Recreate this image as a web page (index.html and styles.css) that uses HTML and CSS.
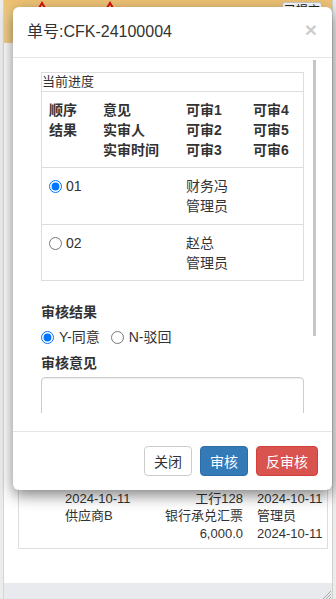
FILE: index.html
```html
<!DOCTYPE html>
<html lang="zh-CN">
<head>
<meta charset="utf-8">
<title>审核</title>
<link rel="stylesheet" href="styles.css">
</head>
<body>
<div class="page">
  <div class="topbar">
    <svg class="mark mark-1" width="8" height="8" viewBox="0 0 8 8"><path d="M1 7 L4 2 L7 7" fill="none" stroke="#e01010" stroke-width="2"/></svg>
    <svg class="mark mark-2" width="8" height="8" viewBox="0 0 8 8"><path d="M1 7 L4 2 L7 7" fill="none" stroke="#e01010" stroke-width="2"/></svg>
    <span class="top-btn">已提交</span>
  </div>
  <div class="content">
    <div class="bill">
      <div class="bill-row"><span>2024-10-11</span><span class="num">工行128</span><span class="c3">2024-10-11</span></div>
      <div class="bill-row"><span>供应商B</span><span class="num">银行承兑汇票</span><span class="c3">管理员</span></div>
      <div class="bill-row"><span></span><span class="num">6,000.0</span><span class="c3">2024-10-11</span></div>
    </div>
  </div>
  <div class="statusbar">
    <svg class="grip" width="9" height="9" viewBox="0 0 9 9"><path d="M9 1 L1 9 M9 4 L4 9 M9 7 L7 9" stroke="#a8a8a8" stroke-width="1"/></svg>
  </div>
</div>

<div class="modal">
  <div class="modal-header">
    <h4 class="modal-title">单号:CFK-24100004</h4>
    <span class="close">×</span>
  </div>
  <div class="modal-body">
    <div class="scroll">
      <div class="panel">
        <div class="panel-heading">当前进度</div>
        <div class="prog-row prog-head">
          <div>顺序<br>结果</div>
          <div>意见<br>实审人<br>实审时间</div>
          <div>可审1<br>可审2<br>可审3</div>
          <div>可审4<br>可审5<br>可审6</div>
        </div>
        <div class="prog-row">
          <div class="seq"><input type="radio" name="p" checked>01</div>
          <div></div>
          <div>财务冯<br>管理员</div>
          <div></div>
        </div>
        <div class="prog-row last">
          <div class="seq"><input type="radio" name="p">02</div>
          <div></div>
          <div>赵总<br>管理员</div>
          <div></div>
        </div>
      </div>
      <div class="field-label first">审核结果</div>
      <div class="radios">
        <label class="opt"><input type="radio" name="r" checked>Y-同意</label>
        <label class="opt"><input type="radio" name="r">N-驳回</label>
      </div>
      <div class="field-label">审核意见</div>
      <textarea class="textarea"></textarea>
    </div>
    <div class="thumb"></div>
  </div>
  <div class="modal-footer">
    <button class="btn btn-default">关闭</button>
    <button class="btn btn-primary">审核</button>
    <button class="btn btn-danger">反审核</button>
  </div>
</div>
</body>
</html>
```

FILE: styles.css
```css
* { box-sizing: border-box; }
html, body { margin: 0; padding: 0; }
body {
  width: 336px;
  height: 599px;
  overflow: hidden;
  background: #ececec;
  font-family: "Liberation Sans", Arial, "Noto Sans CJK SC", sans-serif;
  color: #333;
  position: relative;
}
.page {
  margin: 0 3px 0 3px;
  height: 599px;
  background: #fff;
  border-left: 1px solid #d6d6d6;
  border-right: 1px solid #d0d0d0;
  display: flex;
  flex-direction: column;
}
.topbar {
  height: 43px;
  background: linear-gradient(#eec272, #f4cf89 40%, #f5d18c);
  position: relative;
  flex: none;
}
.mark { position: absolute; top: 1px; }
.mark-1 { left: 34px; }
.mark-2 { left: 102px; }
.top-btn {
  position: absolute;
  left: 278px;
  top: 2px;
  width: 40px;
  height: 22px;
  background: #fff;
  border: 1px solid #ccc;
  border-radius: 3px;
  font-size: 12px;
  line-height: 16px;
  text-align: center;
  color: #222;
}
.content {
  flex: 1;
  display: flex;
  flex-direction: column;
  padding: 16px 4px 34px 14px;
}
.bill {
  flex: 1;
  border: 1px solid #ddd;
  display: flex;
  flex-direction: column;
  justify-content: flex-end;
  padding: 0 0 6px 46px;
  font-size: 13px;
  color: #333;
}
.bill-row {
  display: grid;
  grid-template-columns: 100px 78px 1fr;
  line-height: 17.5px;
}
.bill-row .num { text-align: right; white-space: nowrap; }
.bill-row .c3 { padding-left: 14px; white-space: nowrap; }
.statusbar {
  height: 16px;
  background: #e8eaed;
  flex: none;
  display: flex;
  justify-content: flex-end;
  align-items: flex-end;
}
.grip { display: block; margin: 0 1px 0 0; }

/* modal */
.modal {
  position: absolute;
  left: 13px;
  top: 7px;
  width: 319px;
  background: #fff;
  border-radius: 6px;
  box-shadow: 0 5px 15px rgba(0,0,0,.5);
}
.modal-header {
  height: 51px;
  border-bottom: 1px solid #e5e5e5;
  display: flex;
  align-items: center;
  justify-content: space-between;
  padding: 0 15px 0 14px;
}
.modal-title {
  margin: 0;
  font-size: 16px;
  font-weight: normal;
  color: #333;
  line-height: 20px;
}
.close {
  font-size: 21px;
  font-weight: bold;
  color: #000;
  opacity: .2;
  line-height: 1;
  margin-top: -6px;
}
.modal-body {
  position: relative;
  height: 373px;
}
.scroll {
  height: 355px;
  overflow: hidden;
  padding: 14px 0 0 28px;
  width: 291px;
}
.thumb {
  position: absolute;
  left: 300px;
  top: 2px;
  width: 3px;
  height: 276px;
  background: #c6c6c6;
}
.panel {
  border: 1px solid #ddd;
  width: 263px;
}
.panel-heading {
  font-size: 13px;
  line-height: 18px;
  border-bottom: 1px solid #ddd;
  padding-left: 0;
}
.prog-row {
  display: grid;
  grid-template-columns: 54px 83px 67px 1fr;
  padding: 8px 0 8px 7px;
  font-size: 14px;
  line-height: 20px;
  border-bottom: 1px solid #ddd;
}
.prog-row.last { border-bottom: none; padding-bottom: 7px; }
.prog-head { font-weight: bold; padding-bottom: 7px; padding-top: 8px; }
.seq { display: flex; align-items: flex-start; white-space: nowrap; }
.seq input {
  width: 13px;
  height: 13px;
  margin: 4px 4px 0 0;
  flex: none;
}
.field-label {
  font-size: 14px;
  font-weight: bold;
  line-height: 20px;
  margin-top: 6px;
}
.field-label.first { margin-top: 21px; }
.radios {
  display: flex;
  margin-top: 5px;
  font-size: 14px;
  line-height: 20px;
}
.opt { display: flex; align-items: center; margin-right: 11px; }
.opt input {
  width: 13px;
  height: 13px;
  margin: 0 5px 0 0;
}
.textarea {
  display: block;
  margin-top: 4px;
  width: 263px;
  height: 80px;
  border: 1px solid #ccc;
  border-radius: 4px;
  box-shadow: inset 0 1px 1px rgba(0,0,0,.075);
  resize: none;
}
.modal-footer {
  border-top: 1px solid #e5e5e5;
  padding: 14px 14px 14px;
  display: flex;
  justify-content: flex-end;
  gap: 8px;
}
.btn {
  height: 30px;
  padding: 0 9px;
  font-family: inherit;
  font-size: 14px;
  border: 1px solid #ccc;
  border-radius: 4px;
  background: #fff;
  color: #333;
}
.btn-primary { background: #337ab7; border-color: #2e6da4; color: #fff; }
.btn-danger { background: #d9534f; border-color: #d43f3a; color: #fff; }
```
